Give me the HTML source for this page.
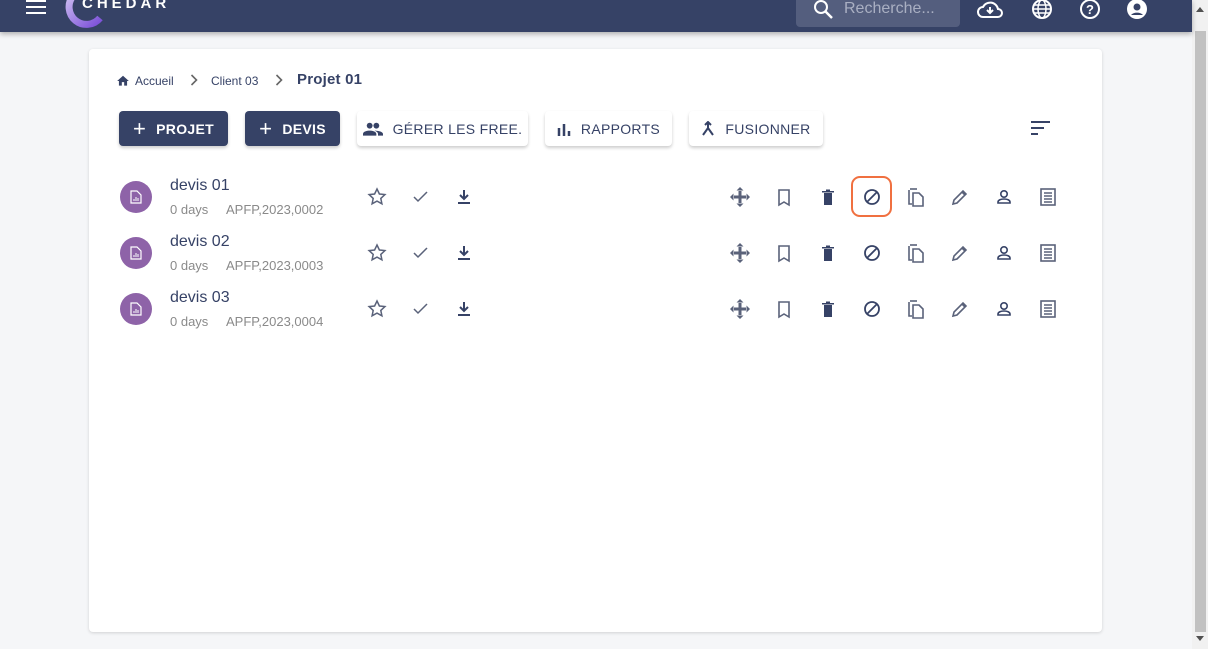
<!DOCTYPE html>
<html><head><meta charset="utf-8"><style>
*{box-sizing:border-box;margin:0;padding:0}
body{width:1208px;height:649px;overflow:hidden;background:#f5f6f8;font-family:"Liberation Sans",Arial,sans-serif;position:relative}
.hdr{position:absolute;left:0;top:0;width:1192px;height:32px;background:#364266;box-shadow:0 2px 5px rgba(0,0,0,.3);z-index:2}
.sb{position:absolute;right:0;top:0;width:16px;height:649px;background:#f1f1f1}
.thumb{position:absolute;left:3px;top:31px;width:11px;height:601px;background:#c1c1c1}
.card{position:absolute;left:89px;top:49px;width:1013px;height:583px;background:#fff;border-radius:4px;box-shadow:0 1px 3px rgba(0,0,0,.15)}
.btn{position:absolute;top:111px;height:35px;border-radius:4px;font-size:14px;font-weight:bold;letter-spacing:.3px;display:flex;align-items:center;justify-content:center;gap:10px;box-shadow:0 2px 3px rgba(0,0,0,.2)}
.dark{background:#364266;color:#fff}
.light{background:#fff;color:#364266;font-weight:normal}
.ic{position:absolute;width:20px;height:20px}
.t{position:absolute;font-size:16px;color:#364266}
.s{position:absolute;font-size:13px;color:#8a8a8a}
.av{position:absolute;left:120px;width:32px;height:32px;border-radius:50%;background:#8e63a8}
.chev{position:absolute;top:74px}
</style></head><body>
<div class="hdr">
<svg style="position:absolute;left:26px;top:0" width="20" height="14"><path d="M0 1h20M0 7h20M0 13h20" stroke="#fff" stroke-width="2"/></svg>
<svg style="position:absolute;left:64px;top:0" width="40" height="28"><defs><linearGradient id="lg" x1="0" y1="0" x2="1" y2="1"><stop offset="0" stop-color="#c9b8f0"/><stop offset="1" stop-color="#7b4fd8"/></linearGradient></defs><path d="M9 -4 A14 14 0 0 0 36 18" stroke="url(#lg)" stroke-width="7" fill="none"/></svg>
<div style="position:absolute;left:82px;top:-5px;color:#fff;font-size:15px;font-weight:bold;letter-spacing:4px">CHEDAR</div>
<div style="position:absolute;left:796px;top:-6px;width:164px;height:33px;background:#545e7e;border-radius:4px"></div>
<svg style="position:absolute;left:814px;top:0" width="20" height="20"><circle cx="7" cy="7" r="6" stroke="#fff" stroke-width="2" fill="none"/><path d="M11 11l7 7" stroke="#fff" stroke-width="2.5"/></svg>
<div style="position:absolute;left:844px;top:0;color:#a9afc2;font-size:16px">Recherche...</div>
<svg style="position:absolute;left:977px;top:-1px" width="26" height="20"><path d="M6 18a5 5 0 0 1 0-10a8 8 0 0 1 15 2a4 4 0 0 1 0 8z" stroke="#fff" stroke-width="2" fill="none"/><path d="M13 8v6M10 11l3 3l3-3" stroke="#fff" stroke-width="2" fill="none"/></svg>
<svg style="position:absolute;left:1032px;top:-1px" width="20" height="20"><circle cx="10" cy="10" r="9" stroke="#fff" stroke-width="2" fill="none"/><ellipse cx="10" cy="10" rx="4" ry="9" stroke="#fff" stroke-width="1.5" fill="none"/><path d="M1 10h18M2 6h16M2 14h16" stroke="#fff" stroke-width="1.5"/></svg>
<svg style="position:absolute;left:1080px;top:-1px" width="20" height="20"><circle cx="10" cy="10" r="9" stroke="#fff" stroke-width="2" fill="none"/><text x="10" y="15" font-size="13" text-anchor="middle" fill="#fff" font-family="Liberation Sans" font-weight="bold">?</text></svg>
<svg style="position:absolute;left:1127px;top:-1px" width="20" height="20"><circle cx="10" cy="10" r="10" fill="#fff"/><circle cx="10" cy="8" r="3.5" fill="#364266"/><path d="M4 16a7 5 0 0 1 12 0" fill="#364266"/></svg>
</div>
<div class="sb"><div class="thumb"></div><svg style="position:absolute;left:4px;top:7px" width="8" height="5"><path d="M0 5L4 0L8 5z" fill="#505050"/></svg><svg style="position:absolute;left:4px;top:636px" width="8" height="5"><path d="M0 0L4 5L8 0z" fill="#505050"/></svg></div>
<div class="card"></div>
<svg class="ic" style="left:116px;top:74px;width:14px;height:14px" viewBox="0 0 24 24"><path d="M10 20v-6h4v6h5v-8h3L12 3 2 12h3v8z" fill="#364266"/></svg>
<div style="position:absolute;left:135px;top:74px;font-size:12px;color:#364266">Accueil</div>
<svg class="chev" style="left:190px" width="8" height="12"><path d="M1.5 1l5 5-5 5" stroke="#666" stroke-width="1.6" fill="none"/></svg>
<div style="position:absolute;left:211px;top:74px;font-size:12px;color:#364266">Client 03</div>
<svg class="chev" style="left:275px" width="8" height="12"><path d="M1.5 1l5 5-5 5" stroke="#666" stroke-width="1.6" fill="none"/></svg>
<div style="position:absolute;left:297px;top:71px;font-size:15px;color:#364266;font-weight:bold;letter-spacing:.2px">Projet 01</div>
<div class="btn dark" style="left:119px;width:109px"><span style="font-size:22px;font-weight:normal">+</span>PROJET</div>
<div class="btn dark" style="left:245px;width:95px"><span style="font-size:22px;font-weight:normal">+</span>DEVIS</div>
<div class="btn light" style="left:357px;width:171px"><svg width="20" height="14" viewBox="0 0 24 16"><circle cx="8" cy="4" r="3.5" fill="#364266"/><circle cx="16" cy="4" r="3.5" fill="#364266"/><path d="M0 16v-2c0-3 5-4 8-4s8 1 8 4v2zM14 10c3 0 10 1 10 4v2h-6v-2c0-2-2-3-4-4z" fill="#364266"/></svg>GÉRER LES FREE.</div>
<div class="btn light" style="left:545px;width:127px"><svg width="14" height="14"><path d="M2 6v8M7 2v12M12 9v5" stroke="#364266" stroke-width="2.5"/></svg>RAPPORTS</div>
<div class="btn light" style="left:689px;width:134px"><svg width="14" height="16"><path d="M7 1v6L2 14M7 7l5 7M4 4l3-3l3 3" stroke="#364266" stroke-width="2" fill="none"/></svg>FUSIONNER</div>
<svg class="ic" style="left:1031px;top:121px;width:20px;height:14px"><path d="M0 1h19M0 7h13M0 13h7" stroke="#364266" stroke-width="2"/></svg>
<div style="position:absolute;left:851px;top:176px;width:41px;height:41px;border:2px solid #f07040;border-radius:9px"></div>
<div id="rows"></div>
<script>
var ys=[197,253,309],names=["devis 01","devis 02","devis 03"],codes=["APFP,2023,0002","APFP,2023,0003","APFP,2023,0004"];
var c="#364266",g="#5a627a";
var icons=[
[377,'<path d="M10 2l2.4 5 5.5.6-4.1 3.8 1.1 5.4L10 14.1 5.1 16.8l1.1-5.4L2.1 7.6l5.5-.6z" stroke="'+g+'" stroke-width="1.5" fill="none"/>'],
[421,'<path d="M3 10l4 4 9-9" stroke="'+g+'" stroke-width="1.5" fill="none"/>'],
[464,'<path d="M10 3v9M6 8l4 4 4-4M4 16h12" stroke="'+c+'" stroke-width="2" fill="none"/>'],
[740,'<path d="M10 0l3.5 3.5h-7zM10 20l3.5-3.5h-7zM0 10l3.5-3.5v7zM20 10l-3.5-3.5v7z" fill="'+g+'"/><path d="M10 4v12M4 10h12" stroke="'+g+'" stroke-width="3"/>'],
[784,'<path d="M5 3h10v15l-5-3-5 3z" stroke="'+g+'" stroke-width="1.6" fill="none"/>'],
[828,'<path d="M6 6h8v12H6zM4 4h12v1.5H4zM8 2.5h4V4H8z" fill="'+c+'"/>'],
[872,'<circle cx="10" cy="10" r="7" stroke="'+c+'" stroke-width="1.8" fill="none"/><path d="M5 15L15 5" stroke="'+c+'" stroke-width="1.8"/>'],
[916,'<path d="M3 3v14h3" stroke="'+g+'" stroke-width="1.6" fill="none"/><path d="M7 6h6l4 4v9H7z" stroke="'+g+'" stroke-width="1.6" fill="none"/><path d="M4 2h7" stroke="'+g+'" stroke-width="1.6"/>'],
[960,'<path d="M3 17l1-4L13 4l3 3-9 9z M12 5l3 3" stroke="'+g+'" stroke-width="1.6" fill="none"/>'],
[1004,'<circle cx="10" cy="7" r="3.2" stroke="'+c+'" stroke-width="1.6" fill="none"/><path d="M4 16v-1c0-2 3-3 6-3s6 1 6 3v1z" stroke="'+c+'" stroke-width="1.6" fill="none"/>'],
[1048,'<rect x="3" y="2" width="14" height="16" stroke="'+g+'" stroke-width="1.6" fill="none"/><path d="M6 6h8M6 9h8M6 12h8M6 15h8" stroke="'+g+'" stroke-width="1.4"/>']];
var h="";
ys.forEach(function(y,i){
h+='<div class="av" style="top:'+(y-16)+'px"><svg style="position:absolute;left:10px;top:9px" width="12" height="14"><path d="M1 1h6l4 4v8H1z" stroke="#fff" stroke-width="1.2" fill="none"/><path d="M4 11V9M6 11V7M8 11V8" stroke="#fff" stroke-width="1"/></svg></div>';
h+='<div class="t" style="left:170px;top:'+(y-20)+'px">'+names[i]+'</div>';
h+='<div class="s" style="left:170px;top:'+(y+5)+'px">0 days</div><div class="s" style="left:226px;top:'+(y+5)+'px">'+codes[i]+'</div>';
icons.forEach(function(ic){h+='<svg class="ic" style="left:'+(ic[0]-10)+'px;top:'+(y-10)+'px" viewBox="0 0 20 20">'+ic[1]+'</svg>';});
});
document.getElementById("rows").innerHTML=h;
</script>
</body></html>
